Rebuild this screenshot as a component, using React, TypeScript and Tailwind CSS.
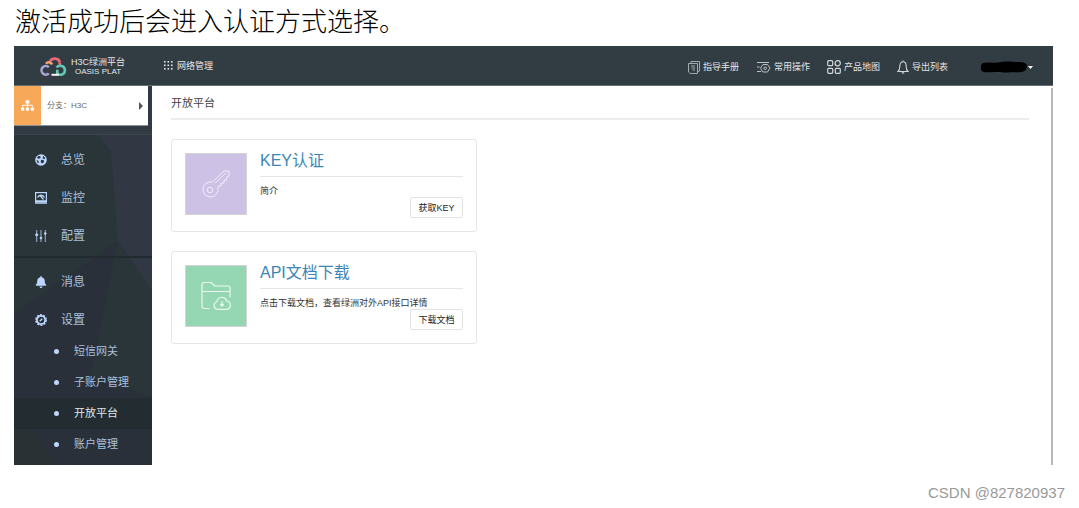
import type { ReactNode } from 'react';
import { FaBell, FaSitemap } from 'react-icons/fa';

interface MenuItem {
  label: string;
  icon: ReactNode;
}

interface ServiceCardProps {
  title: string;
  description: string;
  action: string;
  tileClass: string;
  icon: ReactNode;
}

function LogoIcon() {
  return (
    <svg viewBox="0 0 28 20" className="w-7 h-5" fill="none" strokeWidth="2.600">
      <path d="M9.800 10.200a4.300 4.300 0 1 0 0 6.200" stroke="#a9a4d6" />
      <path d="M7 6.800c1.500-2.300 5-2.200 6 .7" stroke="#f7a278" />
      <path d="M11 4.600c1.300-4 8.800-4.200 9.800.9" stroke="#ee6a78" />
      <path d="M20.800 5.500v2.300" stroke="#ee6a78" />
      <path d="M17.600 10.500c2.500-3.200 8.300-1.600 8.300 2.700s-4.800 5.900-7.600 3.200v-3.600" stroke="#62c9b4" />
      <path d="M12.500 17.800h7.500" stroke="#f3f5f5" strokeWidth="2" />
    </svg>
  );
}

function GridDotsIcon() {
  return (
    <svg viewBox="0 0 9 9" className="w-[9px] h-[9px]" fill="#dfe3e6">
      {[0, 3.5, 7].map((y) => [0, 3.5, 7].map((x) => <rect key={`${x}-${y}`} x={x} y={y} width="1.600" height="1.600" />))}
    </svg>
  );
}

function ManualIcon() {
  return (
    <svg viewBox="0 0 12 13" className="w-3 h-[13px]" fill="none" stroke="#aeb5b9" strokeWidth=".9">
      <path d="M3 2.500V.5h8.500v9.500l-2 1M.5 2.500h9v10H2.200L.5 11z" />
      <path d="M3 5h4M3.500 7h3.500M4.500 9H7" />
    </svg>
  );
}

function OperationIcon() {
  return (
    <svg viewBox="0 0 15 12" className="w-[15px] h-3" fill="none" stroke="#bcc2c6">
      <path d="M1 1.500h12M1 6h2.500M1 10.500h4" />
      <path d="M7 3.500h4.500l2.500 3.500-2.500 4H7L4.500 7z" />
      <circle cx="9.200" cy="7.200" r="1.300" />
    </svg>
  );
}

function ProductMapIcon() {
  return (
    <svg viewBox="0 0 14 14" className="w-3.5 h-3.5" fill="none" stroke="#d2d6d9" strokeWidth="1.200">
      <rect x=".7" y=".7" width="5" height="5" rx="1" />
      <circle cx="10.700" cy="3.200" r="2.600" />
      <rect x=".7" y="8.300" width="5" height="5" rx="1" />
      <rect x="8.300" y="8.300" width="5" height="5" rx="1" />
    </svg>
  );
}

function BellOutlineIcon() {
  return (
    <svg viewBox="0 0 12 14" className="w-3 h-3.5" fill="none" stroke="#d2d6d9" strokeWidth="1.100">
      <path d="M6 .5v1.200M1 11.500c1.500-1.500 1.800-3 1.800-5C2.800 3.500 4 1.800 6 1.800s3.200 1.700 3.200 4.700c0 2 .3 3.500 1.800 5zM4.800 12.900h2.400" />
    </svg>
  );
}

function OverviewIcon() {
  return (
    <svg viewBox="0 0 12 12" className="w-3 h-3">
      <circle cx="6" cy="6" r="5.800" fill="#bcd7fb" />
      <path d="M3.800 1.800l2 .9-.6 1.600-2.300.5-.8-1.200zM8 2l2 1.600-.3 1.700-2-.8zM1.500 6.300l1.700.3.700 2.200-.9.700zM6.200 5.800l2.600.4.300 1.900-2 1.300-1.500-1.500z" fill="#2a343a" />
    </svg>
  );
}

function MonitorIcon() {
  return (
    <svg viewBox="0 0 12 12" className="w-3 h-3" fill="none" stroke="#bcd7fb">
      <rect x=".6" y=".6" width="10.800" height="9" strokeWidth="1.200" />
      <path d="M2.500 5.500c1.500-3 5.500-3 7 0M5 3.500l3.500 4M0 11h12M.5 9h11" strokeWidth="1.300" />
    </svg>
  );
}

function SlidersIcon() {
  return (
    <svg viewBox="0 0 12 12" className="w-3 h-3" fill="#bcd7fb" stroke="#bcd7fb">
      <path d="M1.700 0v12M6 0v12M10.300 0v12" strokeWidth=".8" />
      <circle cx="1.700" cy="4.800" r="1.100" />
      <circle cx="6" cy="8" r=".9" />
      <circle cx="10.300" cy="3.500" r=".9" />
    </svg>
  );
}

function GearIcon() {
  return (
    <svg viewBox="0 0 12 12" className="w-3 h-3" fill="none" stroke="#bcd7fb">
      <circle cx="6" cy="6" r="5.200" strokeWidth="1.400" strokeDasharray="2 1.270" />
      <circle cx="6" cy="6" r="4.100" strokeWidth="1.800" />
      <path d="M4.700 7.300l2.600-2.600" strokeWidth="1.300" />
    </svg>
  );
}

function KeyIcon() {
  return (
    <svg viewBox="0 0 28 28" className="w-7 h-7" fill="none" stroke="#f1edf8" strokeLinejoin="round">
      <path d="M10.300 12L22.200 1H27v5l-2.300 1v3H22v3h-2.800v3h-2.700l-.6 1.500A7.600 7.600 0 1 1 10.300 12z" />
      <circle cx="8" cy="20" r="2.700" />
      <path d="M13 13L24 3" />
    </svg>
  );
}

function FolderIcon() {
  return (
    <svg viewBox="0 0 30 28" className="w-[30px] h-7" fill="none" stroke="#e9f8ef" strokeWidth="1.200" strokeLinecap="round" strokeLinejoin="round">
      <path d="M8 26.500H3a2 2 0 0 1-2-2V2.500a2 2 0 0 1 2-2h7l4 3.500h13a2 2 0 0 1 2 2V15M1 9.500h28" />
      <path d="M16.500 27.300a4 4 0 0 1-.5-7.800c.5-5 8-5.500 9.500-.7 5 .5 5 8.500 0 8.500z" />
      <path d="M21 19.500v4.500m-1.500-1.500l1.500 1.700 1.500-1.700" />
    </svg>
  );
}

const headerLinks: MenuItem[] = [
  { label: '指导手册', icon: <ManualIcon /> },
  { label: '常用操作', icon: <OperationIcon /> },
  { label: '产品地图', icon: <ProductMapIcon /> },
  { label: '导出列表', icon: <BellOutlineIcon /> },
];

const mainMenu: MenuItem[] = [
  { label: '总览', icon: <OverviewIcon /> },
  { label: '监控', icon: <MonitorIcon /> },
  { label: '配置', icon: <SlidersIcon /> },
];

const systemMenu: MenuItem[] = [
  { label: '消息', icon: <FaBell className="w-3 h-3" /> },
  { label: '设置', icon: <GearIcon /> },
];

const settingPages = ['短信网关', '子账户管理', '开放平台', '账户管理'];
const activePage = '开放平台';

function Header() {
  return (
    <header className="flex items-center h-10 bg-[#323c43] border-b border-[#64706f] text-[#e2e6e8] text-[9px] leading-3">
      <a href="#home" className="flex items-center gap-1 w-[138px] pl-[25px] pt-0.5 shrink-0">
        <LogoIcon />
        <span className="flex flex-col items-center leading-[10px] whitespace-nowrap">
          <span>H3C绿洲平台</span>
          <span className="text-[8px]">OASIS PLAT</span>
        </span>
      </a>
      <a href="#network" className="flex items-center gap-1 pl-3">
        <GridDotsIcon />
        网络管理
      </a>
      <nav className="flex items-center gap-[17px] ml-auto whitespace-nowrap pt-[3px]">
        {headerLinks.map((link) => (
          <a key={link.label} href="#top" className="flex items-center gap-[3px]">
            {link.icon}
            {link.label}
          </a>
        ))}
      </nav>
      <button type="button" aria-label="user" className="flex items-center gap-px ml-[33px] mr-5 pt-[3px]">
        <svg viewBox="0 0 46 12" className="w-[46px] h-3" fill="#000">
          <path d="M1 2.500C6 .5 12 2.500 17 1.500S26 .3 32 .8s11-.6 13.500 2.500c1.500 3-.5 6.500-4 7.500s-9 .3-14 .6-9-.8-14-.4S2 12 .5 9.500 0 4 1 2.500z" />
        </svg>
        <svg viewBox="0 0 5 3" className="w-[5px] h-[3px]" fill="#fff">
          <path d="M0 0h5L2.500 3z" />
        </svg>
      </button>
    </header>
  );
}

function MenuGroup({ items }: { items: MenuItem[] }) {
  return (
    <ul className="flex flex-col gap-1.5">
      {items.map((item) => (
        <li key={item.label}>
          <a href="#menu" className="flex items-center gap-3.5 h-8 pl-[21px] text-[12px] text-[#a9c0dc]">
            <span className="text-[#bcd7fb]">{item.icon}</span>
            {item.label}
          </a>
        </li>
      ))}
    </ul>
  );
}

function Sidebar() {
  return (
    <aside className="relative w-[138px] shrink-0 bg-[#2a3539] pb-[5px]">
      {/* faceted backdrop */}
      <svg viewBox="0 0 138 380" preserveAspectRatio="none" className="absolute inset-0 w-full h-full">
        <path d="M0 0h138v49H0z" fill="#323b43" />
        <path d="M84 49h54v156l-34-50-7-90z" fill="#323843" />
        <path d="M104 155L0 228v152h138v-68l-61-22z" fill="#2a303a" />
        <path d="M0 330l18 15 26 35H0z" fill="#2a3135" />
      </svg>
      <div className="relative">
        <button type="button" className="flex items-center w-[134px] h-10 bg-white text-[8px] text-[#666] border-b border-[#8b9193]">
          <span className="flex items-center justify-center w-[27px] h-full bg-[#f7a859] text-white">
            <FaSitemap className="w-[13px] h-[13px]" />
          </span>
          <span className="pl-1.5">分支：H3C</span>
          <svg viewBox="0 0 4 8" className="w-1 h-2 ml-auto mr-[5px]" fill="#555">
            <path d="M0 0l4 4-4 4z" />
          </svg>
        </button>
        <nav className="mt-2 border-t border-[#3b454b] pt-[9px]">
          <MenuGroup items={mainMenu} />
          <div className="mt-1 mb-2 h-0.5 bg-[#212a2f]" />
          <MenuGroup items={systemMenu} />
          <ul>
            {settingPages.map((page) => (
              <li key={page}>
                <a
                  href="#settings"
                  className={`flex items-center gap-[15px] h-[31px] pl-10 text-[11px] ${
                    page === activePage ? 'bg-[#232c30] text-[#dfe6e4]' : 'text-[#a9c0dc]'
                  }`}
                >
                  <span className="w-[5px] h-[5px] rounded-full bg-[#bcd7fb]" />
                  {page}
                </a>
              </li>
            ))}
          </ul>
        </nav>
      </div>
    </aside>
  );
}

function ServiceCard({ title, description, action, tileClass, icon }: ServiceCardProps) {
  return (
    <section className="flex gap-[13px] w-[306px] h-[93px] p-[13px] border border-[#e6e6e6] rounded-[3px]">
      <div className={`flex items-center justify-center w-[62px] h-[62px] shrink-0 border border-[#d5d5d5] ${tileClass}`}>
        {icon}
      </div>
      <div className="flex flex-col flex-1">
        <h2 className="h-6 text-[16px] leading-4 text-[#3d85b5] border-b border-[#e6e6e6]">{title}</h2>
        <p className="pt-2 text-[9px] leading-3 text-[#333]">{description}</p>
        <button type="button" className="self-end w-[53px] h-[21px] shrink-0 border border-[#e3e3e3] rounded-[2px] text-[9px] leading-3 text-[#222]">
          {action}
        </button>
      </div>
    </section>
  );
}

export default function App() {
  return (
    <div className="min-h-screen flex flex-col bg-white font-['Liberation_Sans','Noto_Sans_CJK_SC',sans-serif]">
      <h1 className="h-[46px] pl-[15px] text-[26px] leading-[44px] font-light text-black">激活成功后会进入认证方式选择。</h1>

      <div className="ml-3.5 mr-[26px]">
        <Header />
        <div className="flex">
          <Sidebar />
          <main className="flex-1 mt-0.5 border-r-2 border-[#b9b9b9] pl-[19px] pr-[22px]">
            <h2 className="h-8 pt-[7px] text-[11px] leading-4 text-[#444] border-b-2 border-[#ececec]">开放平台</h2>
            <div className="flex flex-col gap-[19px] pt-[19px]">
              <ServiceCard title="KEY认证" description="简介" action="获取KEY" tileClass="bg-[#cdc2e6]" icon={<KeyIcon />} />
              <ServiceCard
                title="API文档下载"
                description="点击下载文档，查看绿洲对外API接口详情"
                action="下载文档"
                tileClass="bg-[#95d7b3]"
                icon={<FolderIcon />}
              />
            </div>
          </main>
        </div>
      </div>

      <footer className="mt-auto pr-3.5 pb-1.5 text-right text-[15px] leading-[18px] text-[#999]">CSDN @827820937</footer>
    </div>
  );
}
